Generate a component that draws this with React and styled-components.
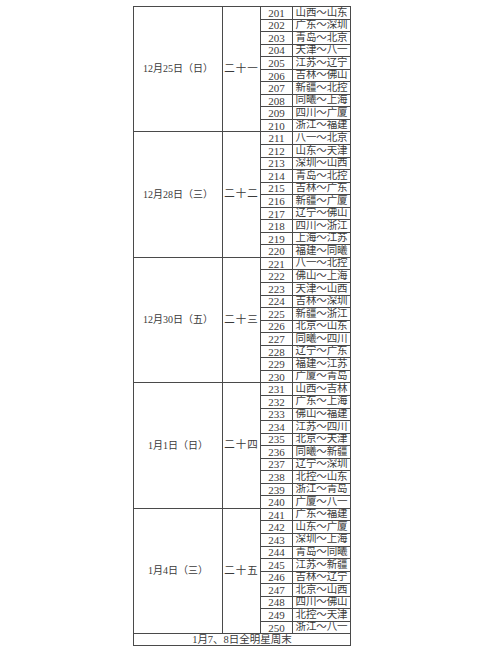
import React from "react";
import styled, { createGlobalStyle } from "styled-components";

const GlobalStyle = createGlobalStyle`
  html, body {
    margin: 0;
    padding: 0;
    background: #ffffff;
  }
  body {
    font-family: "Liberation Serif", "Noto Sans CJK SC", serif;
    color: #3a3a3a;
  }
`;

const Page = styled.div`
  width: 500px;
  height: 664px;
  padding: 6px 0 0 133px;
  box-sizing: border-box;
`;

const Sheet = styled.div`
  display: grid;
  grid-template-columns: 89px 38px 32px 58px;
  grid-template-rows: repeat(50, 12.56px) 12px;
  width: 218px;
  box-sizing: border-box;
  border-left: 1px solid #4a4a4a;
  border-top: 1px solid #4a4a4a;
`;

const Cell = styled.div`
  display: flex;
  align-items: center;
  justify-content: center;
  box-sizing: border-box;
  border-right: 1px solid #4a4a4a;
  border-bottom: 1px solid #4a4a4a;
  font-size: 10.5px;
  line-height: 1;
  white-space: nowrap;
  overflow: hidden;
  grid-row: ${({ $span }) => ($span ? `span ${$span}` : "auto")};
  grid-column: ${({ $wide }) => ($wide ? "1 / -1" : "auto")};
`;

const DateCell = styled(Cell)`
  font-size: 10px;
`;

const RoundCell = styled(Cell)`
  letter-spacing: 1px;
`;

const NumCell = styled(Cell)`
  font-size: 11px;
  padding-top: 1px;
`;

const NameCell = styled(Cell)`
  letter-spacing: -0.1px;
`;

const FootCell = styled(Cell)`
  font-size: 10.5px;
`;

const blocks = [
  {
    date: "12月25日（日）",
    round: "二十一",
    games: ["山西～山东", "广东～深圳", "青岛～北京", "天津～八一", "江苏～辽宁", "吉林～佛山", "新疆～北控", "同曦～上海", "四川～广厦", "浙江～福建"],
  },
  {
    date: "12月28日（三）",
    round: "二十二",
    games: ["八一～北京", "山东～天津", "深圳～山西", "青岛～北控", "吉林～广东", "新疆～广厦", "辽宁～佛山", "四川～浙江", "上海～江苏", "福建～同曦"],
  },
  {
    date: "12月30日（五）",
    round: "二十三",
    games: ["八一～北控", "佛山～上海", "天津～山西", "吉林～深圳", "新疆～浙江", "北京～山东", "同曦～四川", "辽宁～广东", "福建～江苏", "广厦～青岛"],
  },
  {
    date: "1月1日（日）",
    round: "二十四",
    games: ["山西～吉林", "广东～上海", "佛山～福建", "江苏～四川", "北京～天津", "同曦～新疆", "辽宁～深圳", "北控～山东", "浙江～青岛", "广厦～八一"],
  },
  {
    date: "1月4日（三）",
    round: "二十五",
    games: ["广东～福建", "山东～广厦", "深圳～上海", "青岛～同曦", "江苏～新疆", "吉林～辽宁", "北京～山西", "四川～佛山", "北控～天津", "浙江～八一"],
  },
];

export default function App() {
  return (
    <Page>
      <GlobalStyle />
      <Sheet>
        {blocks.map((b, bi) =>
          b.games.map((g, gi) => {
            const no = 201 + bi * 10 + gi;
            return (
              <React.Fragment key={no}>
                {gi === 0 && (
                  <>
                    <DateCell $span={10}>{b.date}</DateCell>
                    <RoundCell $span={10}>{b.round}</RoundCell>
                  </>
                )}
                <NumCell>{no}</NumCell>
                <NameCell>{g}</NameCell>
              </React.Fragment>
            );
          })
        )}
        <FootCell $wide>1月7、8日全明星周末</FootCell>
      </Sheet>
    </Page>
  );
}
